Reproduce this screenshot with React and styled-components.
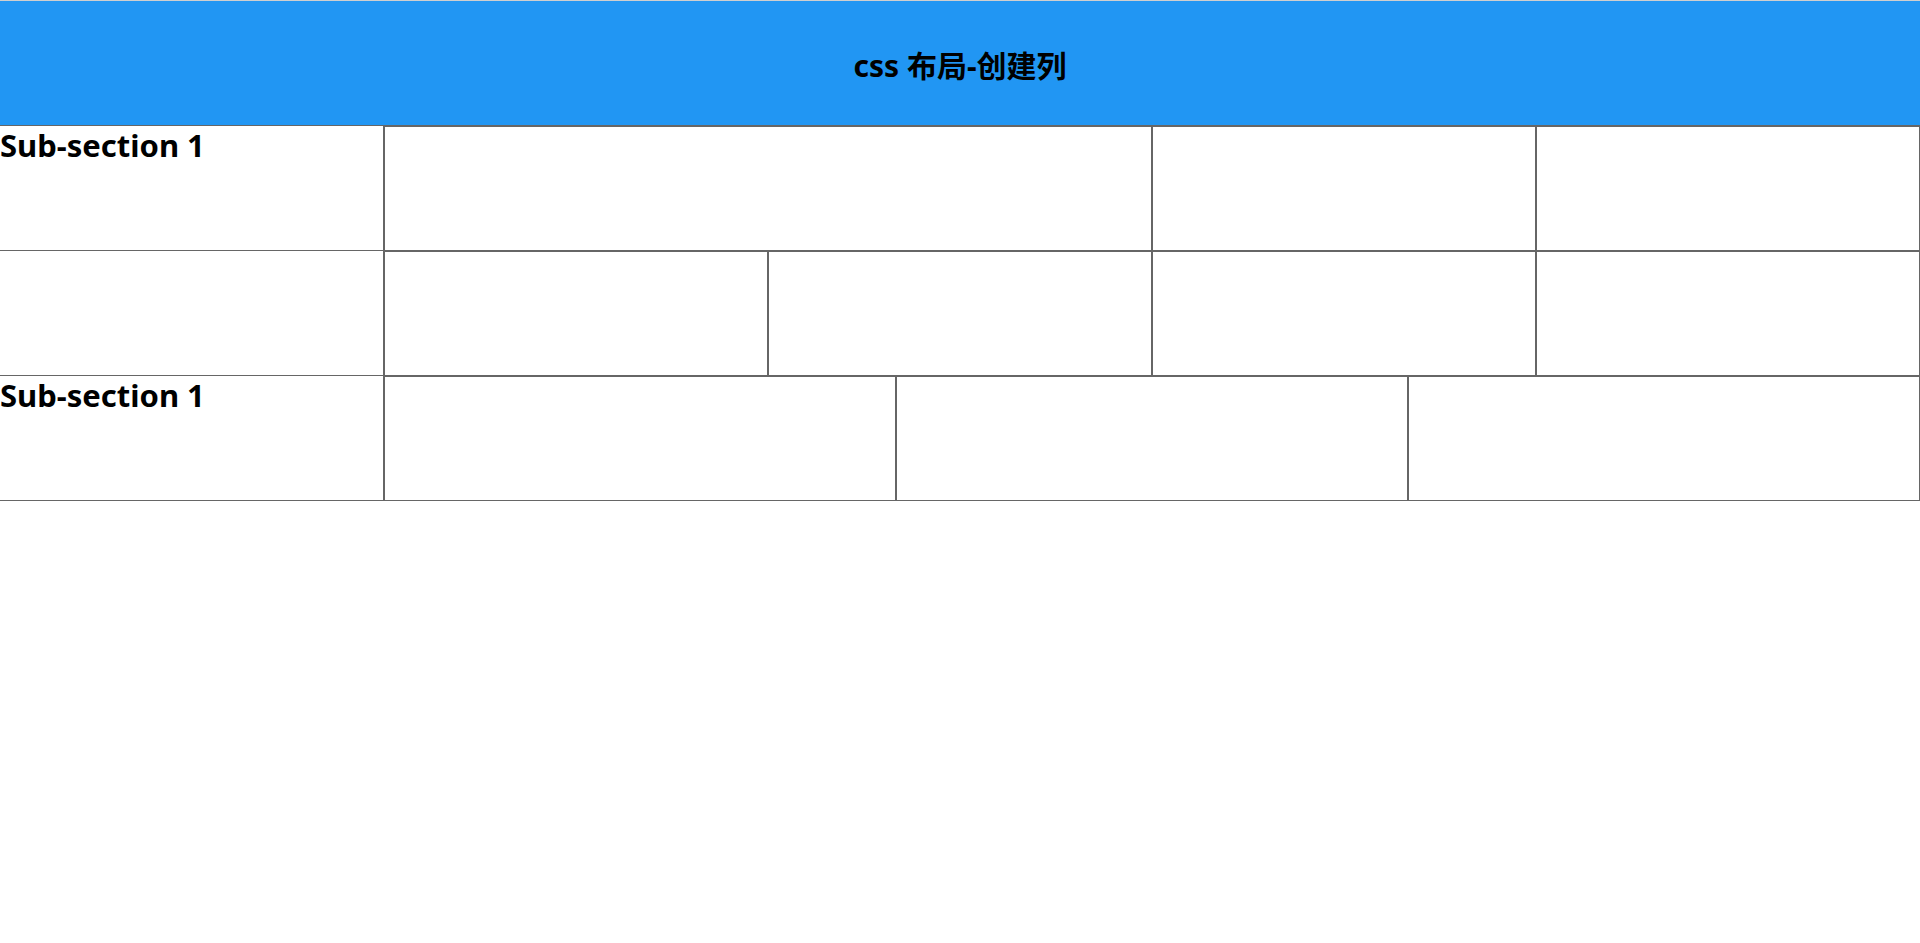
import React from 'react';
import styled, { createGlobalStyle } from 'styled-components';

const GlobalStyle = createGlobalStyle`
  html, body {
    margin: 0;
    padding: 0;
    background: #ffffff;
  }
  body {
    font-family: "Noto Sans", "Noto Sans CJK SC", sans-serif;
    color: #000;
  }
  * {
    box-sizing: border-box;
  }
`;

const sections = [
  { title: 'Sub-section 1', spans: [2, 1, 1], cols: 4 },
  { title: '', spans: [1, 1, 1, 1], cols: 4 },
  { title: 'Sub-section 1', spans: [1, 1, 1], cols: 3 },
];

const App = () => {
  return (
    <>
      <GlobalStyle />
      <Page>
        <Header>
          <Title>css 布局-创建列</Title>
        </Header>

        {sections.map((section, i) => (
          <Row key={i}>
            <Label>{section.title && <LabelText>{section.title}</LabelText>}</Label>
            <Cells $cols={section.cols}>
              {section.spans.map((span, j) => (
                <Cell key={j} $span={span} />
              ))}
            </Cells>
          </Row>
        ))}
      </Page>
    </>
  );
};

const Page = styled.div`
  width: 100%;
  min-height: 943px;
  border-top: 1px solid #cfcfcf;
`;

const Header = styled.header`
  height: 125px;
  padding-top: 5px;
  background: #2196f3;
  border-bottom: 1px solid #666;
  display: flex;
  align-items: center;
  justify-content: center;
`;

const Title = styled.h2`
  margin: 0;
  font-size: 30px;
  font-weight: 700;
  line-height: 1;
`;

const Row = styled.div`
  display: grid;
  grid-template-columns: 384px 1fr;
  height: 125px;
`;

const Label = styled.div`
  border-bottom: 1px solid #666;
  border-right: 1px solid #666;
`;

const LabelText = styled.h3`
  margin: 0;
  font-size: 31px;
  font-weight: 700;
  line-height: 38px;
`;

const Cells = styled.div`
  display: grid;
  grid-template-columns: repeat(${p => p.$cols}, 1fr);
`;

const Cell = styled.div`
  grid-column: span ${p => p.$span};
  border: 1px solid #666;
`;

export default App;
